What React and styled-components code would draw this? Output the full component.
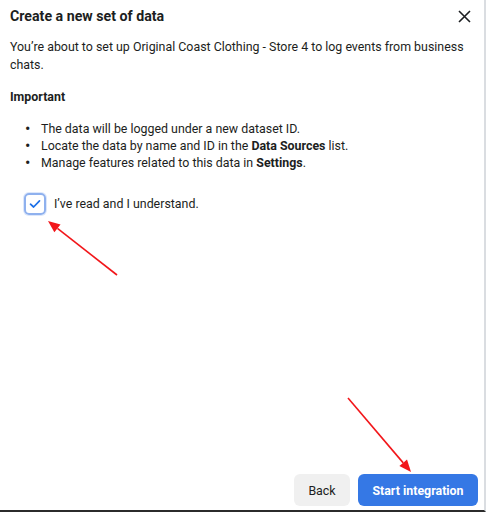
import React from 'react';
import styled, { createGlobalStyle } from 'styled-components';

const Global = createGlobalStyle`
  html, body { margin: 0; padding: 0; background: #fff; }
  body { font-family: Roboto, "Liberation Sans", sans-serif; color: #1c1e21; }
`;

const Frame = styled.div`
  position: relative;
  width: 484px;
  height: 510px;
  border-right: 2px solid #dadde1;
  border-bottom: 2px solid #2b2b2b;
  display: flex;
  flex-direction: column;
  background: #fff;
`;

const Header = styled.div`
  display: flex;
  align-items: center;
  justify-content: space-between;
  padding: 6px 10px 0 10px;
  height: 20px;
`;

const Title = styled.h2`
  margin: 0;
  font-size: 14.2px;
  font-weight: 700;
  line-height: 20px;
  color: #1c1e21;
`;

const Close = styled.button`
  border: 0;
  background: none;
  padding: 0;
  width: 16px;
  height: 16px;
  display: flex;
  align-items: center;
  justify-content: center;
  margin-right: 2px;
`;

const Body = styled.div`
  padding: 12px 10px 0 10px;
  font-size: 12.4px;
  flex: 1;
`;

const Para = styled.p`
  margin: 0;
  line-height: 18px;
`;

const Heading = styled.p`
  margin: 14px 0 0 0;
  line-height: 18px;
  font-weight: 700;
`;

const List = styled.ul`
  margin: 14px 0 0 0;
  padding-left: 15px;
  list-style: none;
  line-height: 17px;
  b { font-weight: 700; }
`;

const Item = styled.li`
  display: flex;
  &::before {
    content: '•';
    width: 16px;
    font-size: 16px;
    line-height: 17px;
  }
`;

const CheckRow = styled.label`
  display: flex;
  align-items: center;
  gap: 8px;
  margin: 22px 0 0 14px;
  line-height: 18px;
`;

const Box = styled.span`
  width: 18px;
  height: 18px;
  border: 2px solid #8fb1ee;
  border-radius: 5px;
  display: flex;
  align-items: center;
  justify-content: center;
  box-shadow: 0 0 0 1px #dce7fb;
`;

const Footer = styled.div`
  display: flex;
  justify-content: flex-end;
  gap: 8px;
  padding: 0 6px 4px 0;
`;

const Button = styled.button`
  height: 32px;
  border: 0;
  border-radius: 6px;
  padding: 0;
  font-family: Roboto, "Liberation Sans", sans-serif;
  font-size: 12.4px;
  font-weight: ${(p) => (p.primary ? 700 : 400)};
  color: ${(p) => (p.primary ? '#fff' : '#1c1e21')};
  background: ${(p) => (p.primary ? '#3578e5' : '#f0f0f0')};
  width: ${(p) => (p.primary ? '120px' : '56px')};
`;

const Arrows = styled.svg`
  position: absolute;
  left: 0;
  top: 0;
  pointer-events: none;
`;

function Arrow({ x1, y1, x2, y2 }) {
  const a = Math.atan2(y2 - y1, x2 - x1);
  const len = 12;
  const w = 5;
  const bx = x2 - len * Math.cos(a);
  const by = y2 - len * Math.sin(a);
  const px = -Math.sin(a) * w;
  const py = Math.cos(a) * w;
  return (
    <g>
      <line x1={x1} y1={y1} x2={bx} y2={by} stroke="#f2161a" strokeWidth="1.6" />
      <polygon points={`${x2},${y2} ${bx + px},${by + py} ${bx - px},${by - py}`} fill="#f2161a" />
    </g>
  );
}

export default function App() {
  return (
    <>
      <Global />
      <Frame>
        <Header>
          <Title>Create a new set of data</Title>
          <Close aria-label="Close">
            <svg width="13" height="13" viewBox="0 0 13 13">
              <path d="M1 1 L12 12 M12 1 L1 12" stroke="#1c1e21" strokeWidth="1.6" />
            </svg>
          </Close>
        </Header>
        <Body>
          <Para>
            You’re about to set up Original Coast Clothing - Store 4 to log events from business chats.
          </Para>
          <Heading>Important</Heading>
          <List>
            <Item><span>The data will be logged under a new dataset ID.</span></Item>
            <Item><span>Locate the data by name and ID in the <b>Data Sources</b> list.</span></Item>
            <Item><span>Manage features related to this data in <b>Settings</b>.</span></Item>
          </List>
          <CheckRow>
            <Box>
              <svg width="12" height="10" viewBox="0 0 12 10">
                <path d="M1.5 5.2 L4.6 8 L10.5 1.8" fill="none" stroke="#1b6fe8" strokeWidth="1.7" strokeLinecap="round" strokeLinejoin="round" />
              </svg>
            </Box>
            I’ve read and I understand.
          </CheckRow>
        </Body>
        <Footer>
          <Button>Back</Button>
          <Button primary>Start integration</Button>
        </Footer>
        <Arrows width="486" height="512">
          <Arrow x1={117} y1={275} x2={48} y2={221} />
          <Arrow x1={348} y1={398} x2={411} y2={472} />
        </Arrows>
      </Frame>
    </>
  );
}
